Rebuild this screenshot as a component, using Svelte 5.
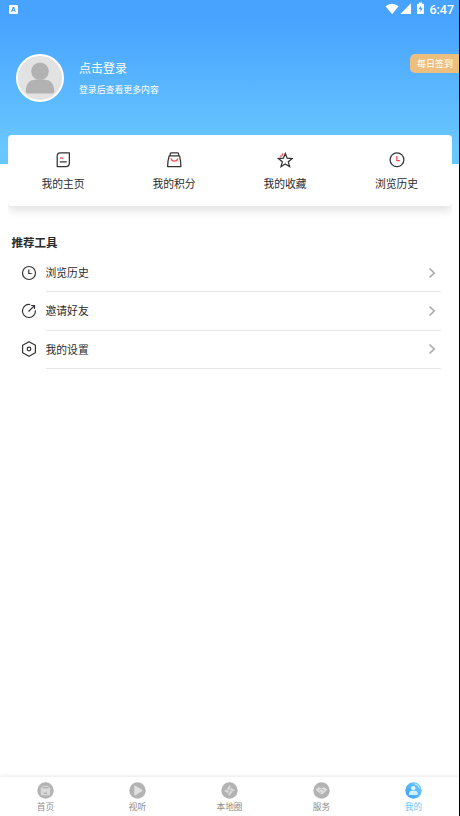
<script>
  const shortcuts = [
    { label: '我的主页', icon: 'page' },
    { label: '我的积分', icon: 'bag' },
    { label: '我的收藏', icon: 'star' },
    { label: '浏览历史', icon: 'clock' }
  ];
  const tools = [
    { label: '浏览历史', icon: 'clock' },
    { label: '邀请好友', icon: 'invite' },
    { label: '我的设置', icon: 'settings' }
  ];
  const tabs = [
    { label: '首页', icon: 'home' },
    { label: '视听', icon: 'play' },
    { label: '本地圈', icon: 'local' },
    { label: '服务', icon: 'service' },
    { label: '我的', icon: 'me', active: true }
  ];
</script>

<div class="app">
  <header>
    <div class="status">
      <svg class="ime" width="9" height="9" viewBox="0 0 9 9"><rect width="9" height="9" rx="1" fill="#fff"/><path d="M2.6 6.7 4.1 2.6h.7l1.5 4.1M3.2 5.3h2.5" fill="none" stroke="#459ff5" stroke-width="1.1"/></svg>
      <div class="sys">
        <svg width="40" height="14" viewBox="0 0 40 14" fill="#fff">
          <path d="M.5 4.3Q7 -.7 13.6 4.3L7.1 12.2z"/>
          <path d="M15.3 12 26 1.2V12z"/>
          <path fill-rule="evenodd" d="M34 .5h3v1.2h1.3q.7 0 .7.7v9q0 .7-.7.7h-5.600q-.7 0-.7-.7v-9q0-.7.7-.7H34zM36 3.500l-2.300 3.700h1.700v2.900l2.300-3.800H36z"/>
        </svg>
        <span>6:47</span>
      </div>
    </div>
    <div class="profile">
      <svg class="avatar" width="48" height="48" viewBox="0 0 48 48">
        <circle cx="24" cy="24" r="23" fill="#e2e2e2" stroke="#fff" stroke-width="2"/>
        <circle cx="24" cy="17.200" r="8.800" fill="#b2b2b2"/>
        <path d="M9.800 37.500C9.800 29.500 14 25.700 19 25.700h10c5 0 9.200 3.800 9.200 11.800q0 2-2 2H11.800q-2 0-2-2z" fill="#b2b2b2"/>
      </svg>
      <div class="who">
        <div class="login">点击登录</div>
        <div class="hint">登录后查看更多内容</div>
      </div>
      <div class="sign">每日签到</div>
    </div>
  </header>

  <section class="card">
    {#each shortcuts as s}
      <div class="shortcut">
        <svg width="16" height="16" viewBox="0 0 16 16" fill="none" stroke="#333" stroke-width="1.250" stroke-linejoin="round">
          {#if s.icon === 'page'}
            <path d="M5.200 .9h9.200v9.800q0 3.900-3.700 3.900H2.200V4.200Q2.200.9 5.200.9z"/>
            <path d="M4.800 9.900h6.900"/><path d="M4.900 6.100h3.300" stroke="#f7474f"/>
          {:else if s.icon === 'bag'}
            <path d="M3.200 3.800h10.400q1.200 5 1.300 10.800H1.600Q1.700 8.800 3.200 3.800z"/><path d="M4.200 3.800V1.800q0-.9.900-.9h6.600q.9 0 .9.900v2"/><path d="M5 6.300q.4 2.700 3.400 2.700t3.400-2.700" stroke="#f7474f"/>
          {:else if s.icon === 'star'}
            <path d="M8.300 1.500l1.900 4.700 5 .4-3.900 3.200 1.300 4.800-4.300-2.700-4.300 2.700 1.300-4.800-3.900-3.200 5-.4z" stroke-linejoin="miter"/><path d="M2.700 4.200h2.100M5.400 1.600v2.200" stroke="#f7474f"/>
          {:else}
            <circle cx="8" cy="7.700" r="6.900"/><path d="M7.800 3.900v4.600h3.100" stroke="#f7474f"/>
          {/if}
        </svg>
        <span>{s.label}</span>
      </div>
    {/each}
  </section>

  <main>
    <h2>推荐工具</h2>
    {#each tools as t}
      <div class="tool">
        <svg class="ticon" width="16" height="16" viewBox="0 0 16 16" fill="none" stroke="#333" stroke-width="1.200">
          {#if t.icon === 'clock'}
            <circle cx="8" cy="8" r="6.500"/><path d="M7.800 4.500v4h2.900"/>
          {:else if t.icon === 'invite'}
            <path d="M9.200 1.600A6.500 6.500 0 1 0 14.400 7.300M7.500 8.500l5.700-5.700M10.100 2.500h3.400v3.400"/>
          {:else}
            <path d="M8 .7l6.400 3.600v7.400L8 15.300l-6.400-3.600V4.300z" stroke-linejoin="round"/><circle cx="8" cy="8" r="1.800"/>
          {/if}
        </svg>
        <div class="row">
          <span>{t.label}</span>
          <svg width="8" height="12" viewBox="0 0 8 12" fill="none" stroke="#aaa" stroke-width="1.700"><path d="M1.500 1.500 6.200 6 1.500 10.500"/></svg>
        </div>
      </div>
    {/each}
  </main>

  <nav>
    {#each tabs as t}
      <div class="tab" class:active={t.active}>
        <svg width="17" height="17" viewBox="0 0 17 17">
          {#if t.active}
            <defs><linearGradient id="blue" x1="0" y1="1" x2="1" y2="0"><stop offset="0" stop-color="#3c9dfd"/><stop offset="1" stop-color="#72d0ff"/></linearGradient></defs>
          {/if}
          <circle cx="8.500" cy="8.500" r="8.200" fill={t.active ? 'url(#blue)' : '#b3b3b3'}/>
          {#if t.icon === 'home'}
            <path d="M3.800 6.300 6 3.900h5l2.200 2.400V12q0 1.200-1.200 1.200H5q-1.200 0-1.200-1.200z" fill="#d8d8d8"/><path d="M5.500 5.700h6M6.800 11.200h3.400" stroke="#a5a5a5" fill="none"/>
          {:else if t.icon === 'play'}
            <path d="M5.300 4.200q0-1 1-.5l6.700 4.100q.8.700 0 1.400l-6.700 4.100q-1 .5-1-.5z" fill="#e1e1e1"/>
          {:else if t.icon === 'local'}
            <path d="M8.800 3 10.500 6.200 14 8 10.800 10.500 8.200 14 6.500 10.800 3 9 6.200 6.500z" fill="#dadada"/><path d="M8.500 8.500 9.800 5M8.500 8.500 12 9.500M8.500 8.500 7.200 12M8.500 8.500 5 7.500" stroke="#b3b3b3" stroke-width=".8"/>
          {:else if t.icon === 'service'}
            <path d="M2.800 7.500 5.500 5.200 8.500 6l3-.8 2.700 2.300-1.700 2.300-3.500 2.600-4.700-2.900z" fill="#ddd"/><path d="M6 8.500 8.500 6.700l3.300 2.600M6.800 9.600l1.500 1.200" fill="none" stroke="#b0b0b0" stroke-width=".7"/>
          {:else}
            <circle cx="8.300" cy="6.200" r="2.100" fill="#e8f6ff"/><path d="M3.900 13.100q0-4.400 2.800-4.400h3.400q2.800 0 2.800 4.400z" fill="#d3eeff"/><path d="M9.500 1.900q4 .3 5.300 4.600" fill="none" stroke="#d8f3ff" stroke-width="1"/>
          {/if}
        </svg>
        <span>{t.label}</span>
      </div>
    {/each}
  </nav>
  <div class="edge"></div>
</div>

<style>
  :global(body) { margin: 0; background: #fff; }
  .app {
    position: relative; display: flex; flex-direction: column;
    width: 460px; height: 816px; overflow: hidden; background: #fff; color: #2b2b2b;
    font-family: Roboto, "Noto Sans CJK SC", sans-serif;
  }
  span, .login, .hint, .sign { white-space: nowrap; }
  svg { display: block; flex: none; }
  header { height: 164px; flex: none; background: linear-gradient(#47a3ff 12%, #69c7ff 90%); color: #fff; }
  .status { display: flex; justify-content: space-between; height: 20px; padding: 0 6px 0 9px; }
  .ime { margin-top: 5px; }
  .sys { display: flex; gap: 4px; padding-top: 2px; font: 500 12.500px/16px Roboto, sans-serif; }
  .profile { display: flex; margin-top: 34px; padding-left: 16px; }
  .who { margin-left: 15px; flex: 1; }
  .login { font-size: 12px; line-height: 18px; margin-top: 6px; }
  .hint { font-size: 8.900px; line-height: 14px; margin-top: 5px; }
  .sign {
    width: 50px; height: 19px; box-sizing: border-box; padding-left: 7px;
    border-radius: 5px 0 0 5px; background: #edbf7f; font-size: 9px; line-height: 20px;
  }
  .card {
    display: flex; flex: none; height: 71px; width: 444px; margin: -29px 0 0 8px;
    background: #fff; border-radius: 4px; box-shadow: 0 5px 8px #e4e4e4;
    clip-path: inset(0 0 -14px 0);
  }
  .shortcut { width: 111px; display: flex; flex-direction: column; align-items: center; padding: 17px 1px 0 0; box-sizing: border-box; }
  .shortcut span { font-size: 10.800px; line-height: 16px; margin-top: 9px; }
  .shortcut:last-child { padding-right: 0; }
  main { flex: 1; padding-top: 28px; }
  h2 { margin: 0 0 0 11.500px; font-size: 11.500px; line-height: 18px; font-weight: 700; height: 18px; }
  .tool { display: flex; padding-left: 20.500px; height: 38.300px; }
  .tool:first-of-type { margin-top: 2px; }
  .ticon { margin-top: 10.500px; }
  .row { display: flex; flex: none; justify-content: space-between; align-items: center; width: 395.500px; margin-left: 9px; padding-right: 5px; box-sizing: border-box; border-bottom: 1px solid #e6e6e6; }
  .row span { font-size: 10.800px; line-height: 16px; padding-top: 3px; }
  nav { display: flex; flex: none; height: 39px; background: #fff; box-shadow: 0 -1px 4px #e9e9e9; }
  .tab { width: 92px; display: flex; flex-direction: column; align-items: center; padding: 5px 1px 0 0; box-sizing: border-box; color: #8e8e8e; }
  .tab span { font-size: 8.700px; line-height: 13px; margin-top: 2px; }
  .tab.active { color: #68c6ff; }
  .edge { position: absolute; top: 0; right: 0; width: 1px; height: 100%; background: #000; }
</style>
